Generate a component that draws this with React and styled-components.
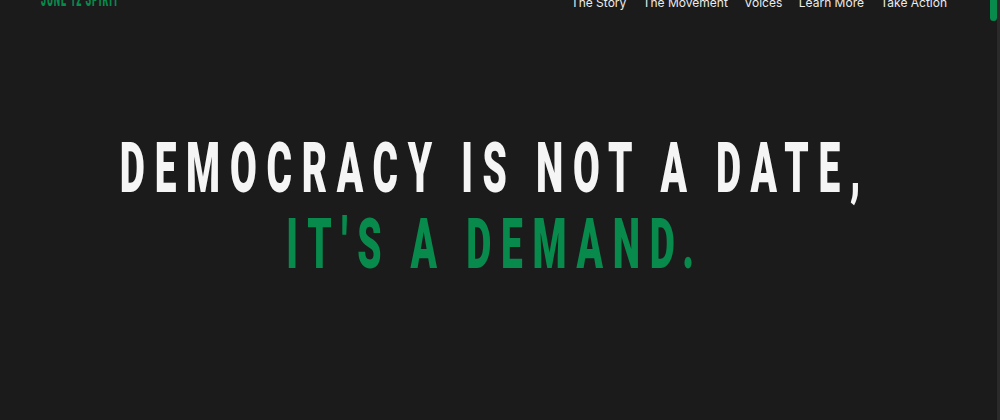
import React from "react";
import styled, { createGlobalStyle } from "styled-components";

const GREEN = "#078a4c";

const GlobalStyle = createGlobalStyle`
  html, body {
    margin: 0;
    padding: 0;
    height: 100%;
    overflow: hidden;
    background: #1b1b1b;
  }
  #root {
    height: 100%;
  }
`;

const Page = styled.div`
  height: 100%;
  display: flex;
  flex-direction: column;
  padding-right: 10px;
  box-sizing: border-box;
  background: #1b1b1b;
`;

const Header = styled.header`
  display: flex;
  justify-content: space-between;
  align-items: center;
  height: 28px;
  margin-top: -12px;
  padding: 0 43px 0 41px;
`;

const Logo = styled.a`
  display: inline-block;
  font-family: Roboto, "Liberation Sans", sans-serif;
  font-weight: 900;
  font-size: 20px;
  letter-spacing: 2px;
  color: ${GREEN};
  text-decoration: none;
  transform: scaleX(0.45) translateY(-3px);
  transform-origin: left center;
  white-space: nowrap;
`;

const NavMenu = styled.nav`
  display: flex;
  align-items: center;
  gap: 16.5px;
`;

const NavLink = styled.a`
  font-family: Inter, "Liberation Sans", sans-serif;
  font-size: 12px;
  color: #ececec;
  text-decoration: none;
  white-space: nowrap;
`;

const Hero = styled.section`
  flex: 1;
  display: flex;
  flex-direction: column;
  align-items: center;
  padding-top: 114px;
`;

const Line = styled.span`
  display: inline-block;
  font-family: Roboto, "Liberation Sans", sans-serif;
  font-weight: 900;
  font-size: 70px;
  line-height: 76px;
  letter-spacing: 17.5px;
  color: ${(p) => (p.$accent ? GREEN : "#f5f5f5")};
  transform: scaleX(0.555);
  white-space: nowrap;
`;

const ScrollTrack = styled.div`
  position: fixed;
  top: 0;
  right: 0;
  width: 10px;
  height: 100%;
  background: #1b1b1b;
  border-right: 3px solid #2a2a2a;
  box-sizing: border-box;
`;

const ScrollThumb = styled.div`
  width: 7px;
  height: 27px;
  margin-top: -6px;
  border-radius: 4px;
  background: ${GREEN};
`;

const links = ["The Story", "The Movement", "Voices", "Learn More", "Take Action"];

export default function App() {
  return (
    <>
      <GlobalStyle />
      <Page>
        <Header>
          <Logo href="#">JUNE 12 SPIRIT</Logo>
          <NavMenu>
            {links.map((l) => (
              <NavLink key={l} href="#">
                {l}
              </NavLink>
            ))}
          </NavMenu>
        </Header>
        <Hero>
          <Line>DEMOCRACY IS NOT A DATE,</Line>
          <Line $accent>IT'S A DEMAND.</Line>
        </Hero>
      </Page>
      <ScrollTrack>
        <ScrollThumb />
      </ScrollTrack>
    </>
  );
}
